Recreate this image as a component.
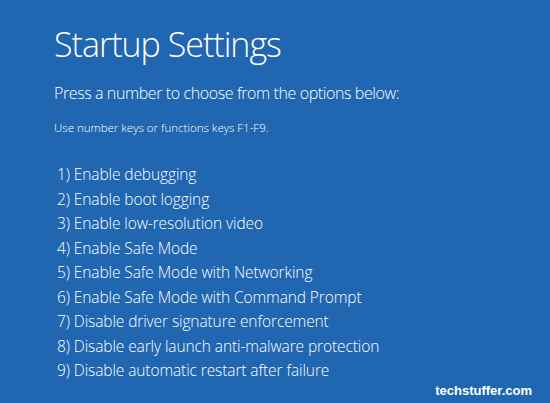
const options = [
  "1) Enable debugging",
  "2) Enable boot logging",
  "3) Enable low-resolution video",
  "4) Enable Safe Mode",
  "5) Enable Safe Mode with Networking",
  "6) Enable Safe Mode with Command Prompt",
  "7) Disable driver signature enforcement",
  "8) Disable early launch anti-malware protection",
  "9) Disable automatic restart after failure",
];

export default function App() {
  return (
    <div className="relative w-[550px] h-[403px] overflow-hidden bg-[#2066b1] text-white font-['Open_Sans',sans-serif]">
      <div className="pl-[54px] pt-[24px]">
        <h1 className="text-[34px] leading-[40px] font-light tracking-[-1px]">Startup Settings</h1>
        <p className="mt-[18px] text-[16px] leading-[22px] font-light tracking-[-0.4px]">
          Press a number to choose from the options below:
        </p>
        <p className="mt-[16px] text-[11.5px] leading-[16px] font-light">
          Use number keys or functions keys F1-F9.
        </p>
        <ul className="mt-[26px] pl-[3px] text-[15.5px] font-light tracking-[-0.1px]">
          {options.map((o) => (
            <li key={o} className="h-[24.5px] leading-[24.5px]">
              {o}
            </li>
          ))}
        </ul>
      </div>
      <div className="absolute right-[18px] bottom-[5px] text-[13px] leading-[15px] font-bold font-['Liberation_Sans',sans-serif]">
        techstuffer.com
      </div>
    </div>
  );
}
